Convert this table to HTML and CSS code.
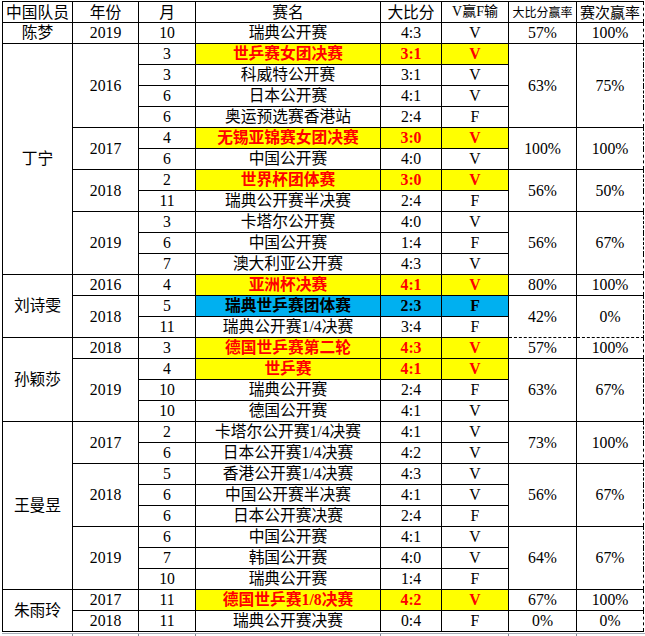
FILE: index.html
```html
<!DOCTYPE html>
<html lang="zh-CN">
<head>
<meta charset="utf-8">
<title>中国队员战绩</title>
<link rel="stylesheet" href="styles.css">
</head>
<body>
<div class="sheet">
<table class="grid">
<colgroup>
<col class="c1"><col class="c2"><col class="c3"><col class="c4"><col class="c5"><col class="c6"><col class="c7"><col class="c8">
</colgroup>
<tr class="head">
<td>中国队员</td><td>年份</td><td>月</td><td>赛名</td><td>大比分</td><td class="h14">V赢F输</td><td class="h12">大比分赢率</td><td class="h15 last">赛次赢率</td>
</tr>
<tr><td>陈梦</td><td>2019</td><td>10</td><td>瑞典公开赛</td><td>4:3</td><td>V</td><td>57%</td><td class="last">100%</td></tr>

<tr><td rowspan="11">丁宁</td><td rowspan="4">2016</td><td>3</td><td class="hl">世乒赛女团决赛</td><td class="hl">3:1</td><td class="hl">V</td><td rowspan="4">63%</td><td rowspan="4" class="last">75%</td></tr>
<tr><td>3</td><td>科威特公开赛</td><td>3:1</td><td>V</td></tr>
<tr><td>6</td><td>日本公开赛</td><td>4:1</td><td>V</td></tr>
<tr><td>6</td><td>奥运预选赛香港站</td><td>2:4</td><td>F</td></tr>
<tr><td rowspan="2">2017</td><td>4</td><td class="hl">无锡亚锦赛女团决赛</td><td class="hl">3:0</td><td class="hl">V</td><td rowspan="2">100%</td><td rowspan="2" class="last">100%</td></tr>
<tr><td>6</td><td>中国公开赛</td><td>4:0</td><td>V</td></tr>
<tr><td rowspan="2">2018</td><td>2</td><td class="hl">世界杯团体赛</td><td class="hl">3:0</td><td class="hl">V</td><td rowspan="2">56%</td><td rowspan="2" class="last">50%</td></tr>
<tr><td>11</td><td>瑞典公开赛半决赛</td><td>2:4</td><td>F</td></tr>
<tr><td rowspan="3">2019</td><td>3</td><td>卡塔尔公开赛</td><td>4:0</td><td>V</td><td rowspan="3">56%</td><td rowspan="3" class="last">67%</td></tr>
<tr><td>6</td><td>中国公开赛</td><td>1:4</td><td>F</td></tr>
<tr><td>7</td><td>澳大利亚公开赛</td><td>4:3</td><td>V</td></tr>

<tr><td rowspan="3">刘诗雯</td><td>2016</td><td>4</td><td class="hl">亚洲杯决赛</td><td class="hl">4:1</td><td class="hl">V</td><td>80%</td><td class="last">100%</td></tr>
<tr><td rowspan="2">2018</td><td>5</td><td class="bl">瑞典世乒赛团体赛</td><td class="bl">2:3</td><td class="bl">F</td><td rowspan="2" class="db">42%</td><td rowspan="2" class="db last">0%</td></tr>
<tr><td>11</td><td>瑞典公开赛1/4决赛</td><td>3:4</td><td>F</td></tr>

<tr><td rowspan="4">孙颖莎</td><td>2018</td><td>3</td><td class="hl">德国世乒赛第二轮</td><td class="hl">4:3</td><td class="hl">V</td><td class="dt">57%</td><td class="dt last">100%</td></tr>
<tr><td rowspan="3">2019</td><td>4</td><td class="hl">世乒赛</td><td class="hl">4:1</td><td class="hl">V</td><td rowspan="3">63%</td><td rowspan="3" class="last">67%</td></tr>
<tr><td>10</td><td>瑞典公开赛</td><td>2:4</td><td>F</td></tr>
<tr><td>10</td><td>德国公开赛</td><td>4:1</td><td>V</td></tr>

<tr><td rowspan="8">王曼昱</td><td rowspan="2">2017</td><td>2</td><td>卡塔尔公开赛1/4决赛</td><td>4:1</td><td>V</td><td rowspan="2">73%</td><td rowspan="2" class="last">100%</td></tr>
<tr><td>6</td><td>日本公开赛1/4决赛</td><td>4:2</td><td>V</td></tr>
<tr><td rowspan="3">2018</td><td>5</td><td>香港公开赛1/4决赛</td><td>4:3</td><td>V</td><td rowspan="3">56%</td><td rowspan="3" class="last">67%</td></tr>
<tr><td>6</td><td>中国公开赛半决赛</td><td>4:1</td><td>V</td></tr>
<tr><td>6</td><td>日本公开赛决赛</td><td>2:4</td><td>F</td></tr>
<tr><td rowspan="3">2019</td><td>6</td><td>中国公开赛</td><td>4:1</td><td>V</td><td rowspan="3">64%</td><td rowspan="3" class="last">67%</td></tr>
<tr><td>7</td><td>韩国公开赛</td><td>4:0</td><td>V</td></tr>
<tr><td>10</td><td>瑞典公开赛</td><td>1:4</td><td>F</td></tr>

<tr><td rowspan="2">朱雨玲</td><td>2017</td><td>11</td><td class="hl">德国世乒赛1/8决赛</td><td class="hl">4:2</td><td class="hl">V</td><td>67%</td><td class="last">100%</td></tr>
<tr><td>2018</td><td>11</td><td>瑞典公开赛决赛</td><td>0:4</td><td>F</td><td>0%</td><td class="last">0%</td></tr>
</table>
<div class="strip">
<span class="tick t1"></span><span class="tick t2"></span><span class="tick t3"></span><span class="tick t4"></span><span class="tick t5"></span><span class="tick t6"></span>
</div>
</div>
</body>
</html>
```
FILE: styles.css
```css
html, body {
  margin: 0;
  padding: 0;
  background: #ffffff;
}

.sheet {
  padding: 1px 0 0 2px;
  width: 643px;
}

.grid {
  border-collapse: collapse;
  table-layout: fixed;
  width: 642px;
  font-family: "Liberation Serif", "Noto Sans CJK SC", serif;
  font-size: 15.75px;
  color: #000;
}

.c1 { width: 70px; }
.c2 { width: 66px; }
.c3 { width: 57px; }
.c4 { width: 185px; }
.c5 { width: 61px; }
.c6 { width: 67px; }
.c7 { width: 68px; }
.c8 { width: 67px; }

.grid td {
  border: 1px solid #000;
  padding: 0;
  height: 20px;
  line-height: 20px;
  text-align: center;
  vertical-align: middle;
  white-space: nowrap;
  overflow: hidden;
}

.grid td.last {
  border-right: 1px dashed #000;
}

.grid td.db {
  border-bottom: 1px dashed #000;
}

.grid td.dt {
  border-top: 1px dashed #000;
}

.head td {
  font-family: "Noto Sans CJK SC", sans-serif;
}

.grid .h14 { font-size: 14px; font-family: "Liberation Serif", "Noto Sans CJK SC", serif; }
.grid .h12 { font-size: 12px; }
.grid .h15 { font-size: 15px; }

.grid td.hl {
  background: #ffff00;
  color: #ff0000;
  font-weight: bold;
}

.grid td.bl {
  background: #00b0f0;
  color: #000;
  font-weight: bold;
}

.strip {
  position: relative;
  margin-top: 1px;
  height: 2px;
  border-top: 1px solid #a7afb9;
}

.tick {
  position: absolute;
  top: 0;
  width: 1px;
  height: 2px;
  background: #7d8794;
}
.t1 { left: 70px; }
.t2 { left: 136px; }
.t3 { left: 193px; }
.t4 { left: 378px; }
.t5 { left: 506px; }
.t6 { left: 574px; }
```
